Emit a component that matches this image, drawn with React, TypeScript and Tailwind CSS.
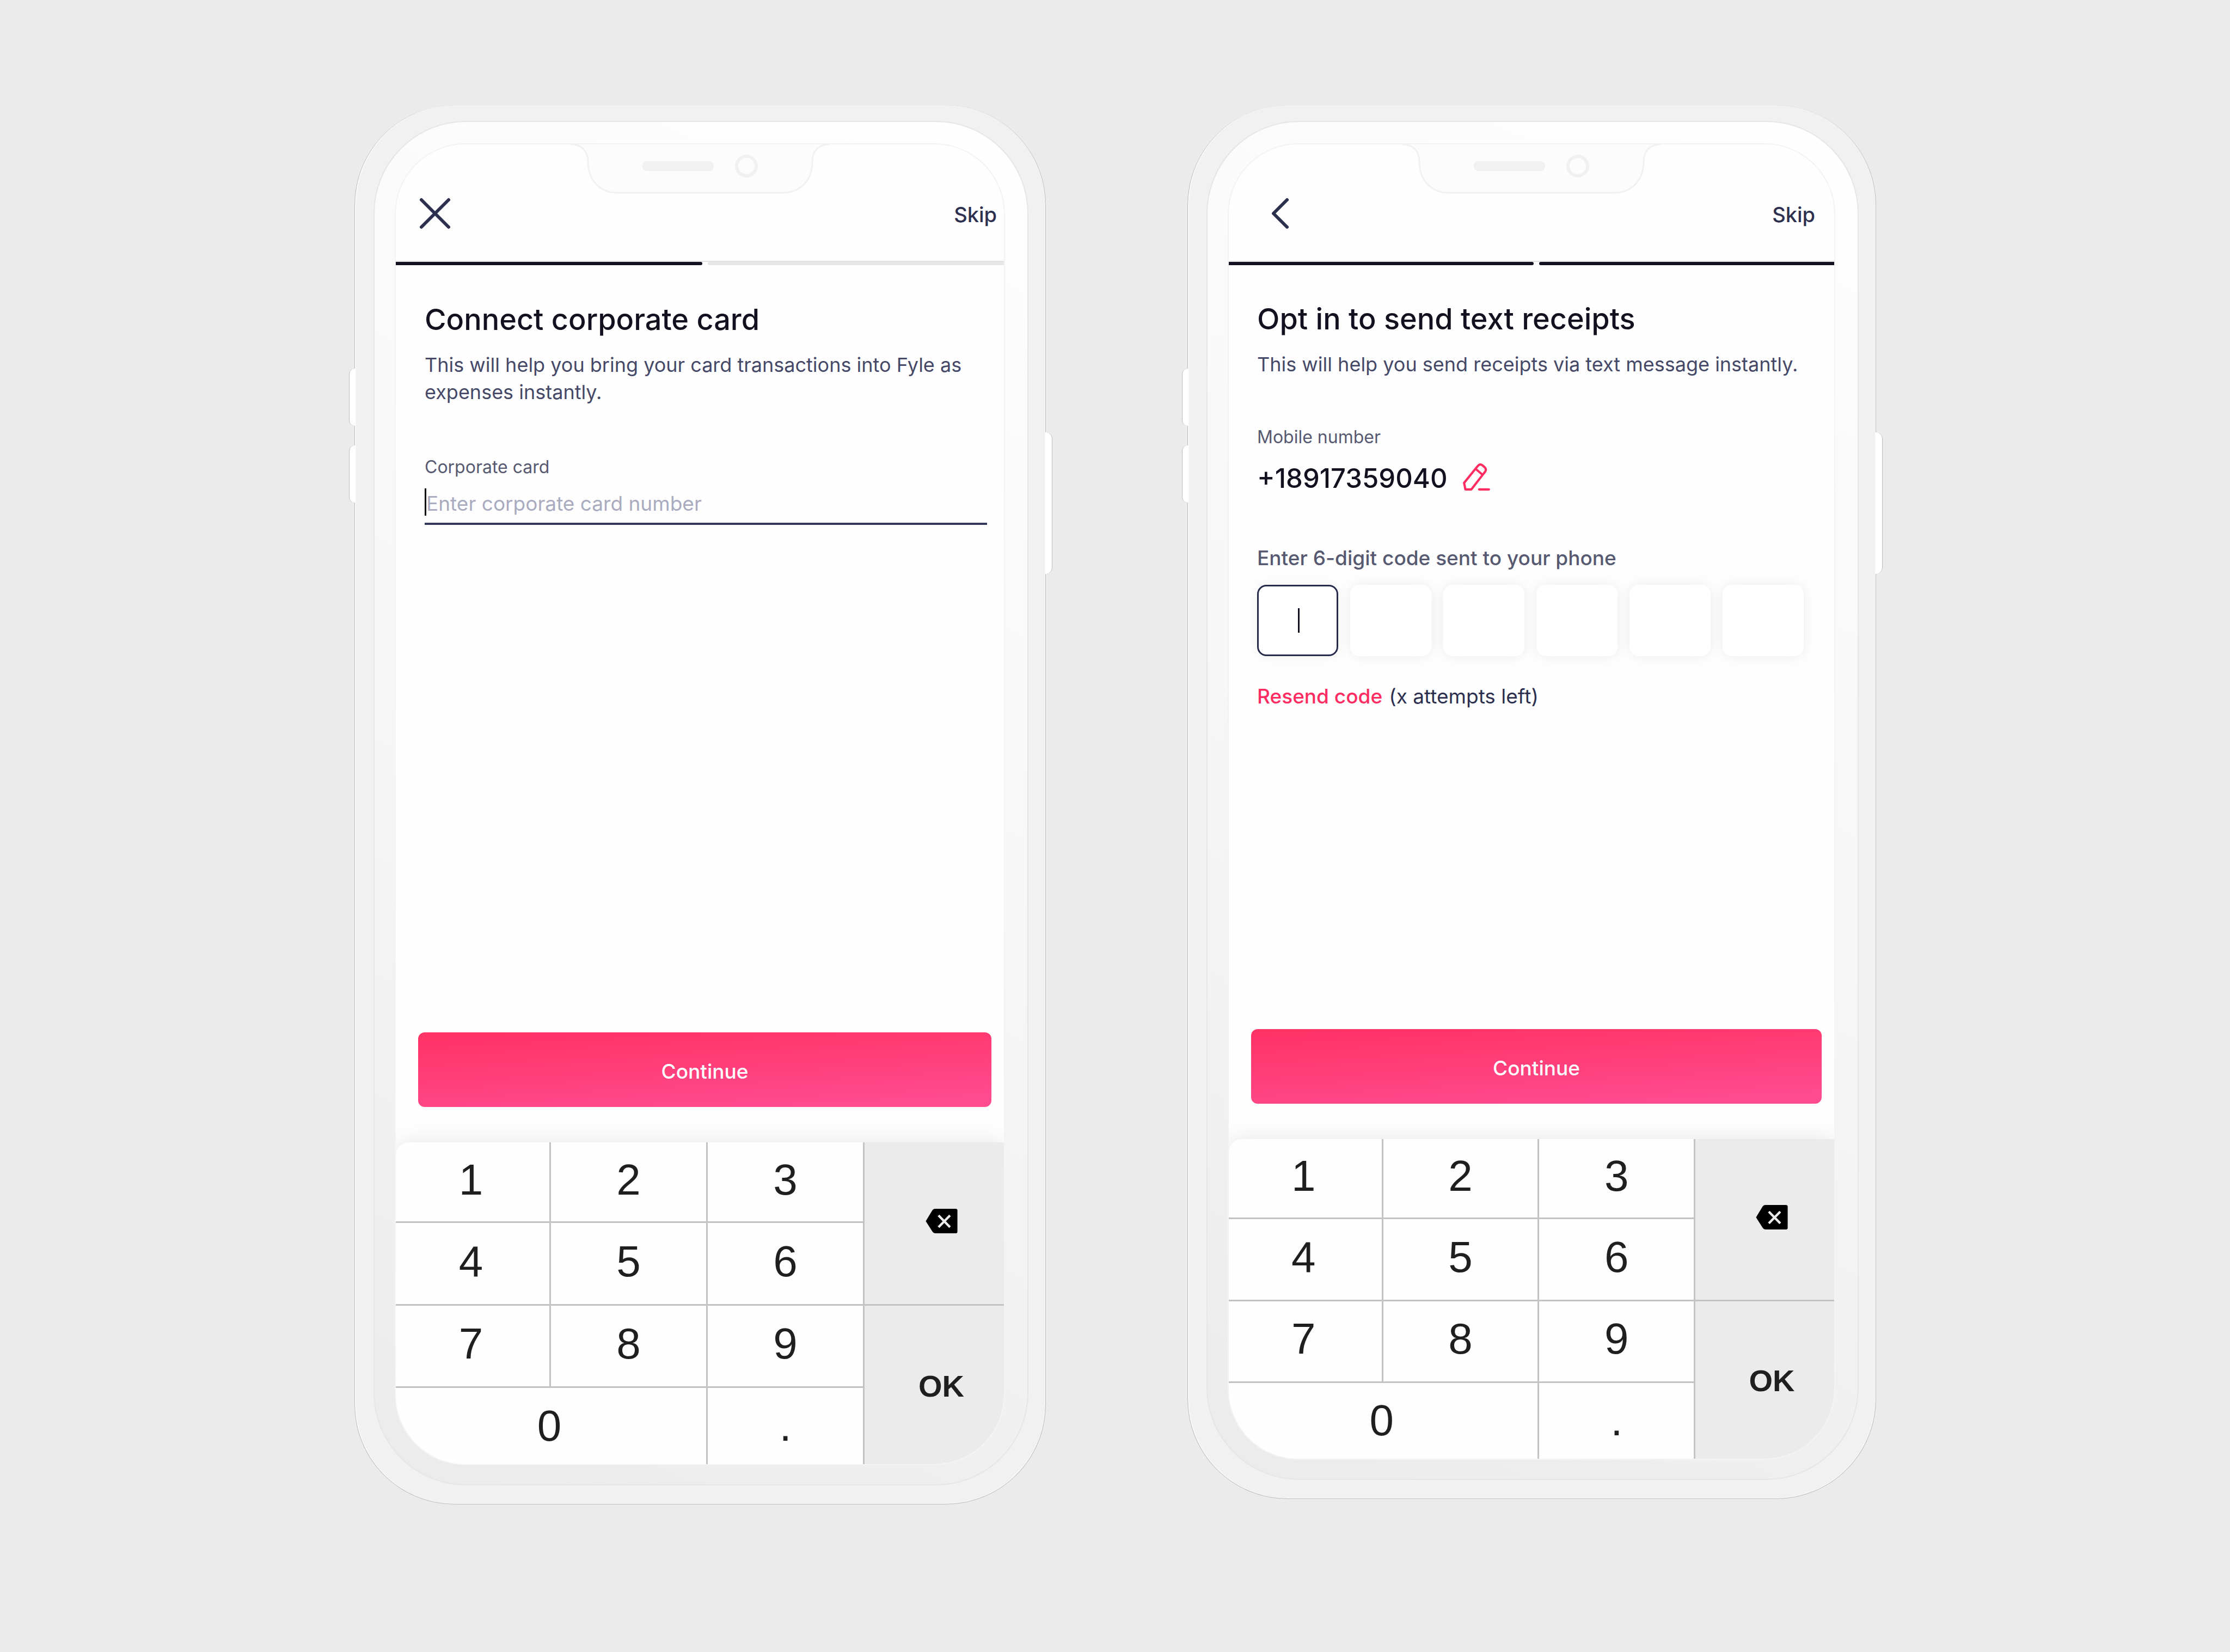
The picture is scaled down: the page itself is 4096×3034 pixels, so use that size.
import type { ReactNode } from "react";

function Notch() {
  return (
    <svg
      className="absolute top-0 left-1/2 -ml-[238px] h-[92px] w-[476px]"
      viewBox="0 0 476 92"
      fill="none"
      aria-hidden="true"
    >
      <path
        d="M0 -2 V1 C22 1 32 14 32 32 C32 66 54 89 86 89 H390 C422 89 444 66 444 32 C444 14 454 1 476 1 V-2 Z"
        fill="#fcfcfc"
      />
      <path
        d="M0 0 C22 0 32 14 32 32 C32 66 54 89 86 89 H390 C422 89 444 66 444 32 C444 14 454 0 476 0"
        stroke="#f1f1f1"
        strokeWidth="3"
      />
      <rect x="132" y="31" width="131" height="18" rx="8" fill="#f1f1f1" />
      <circle cx="323" cy="40" r="18" stroke="#f1f1f1" strokeWidth="6" />
    </svg>
  );
}

function Phone({ className, children }: { className: string; children: ReactNode }) {
  return (
    <section
      className={`relative flex rounded-[184px] border-x border-b border-[#bdbdbd] bg-[#f1f1f1] pt-[29px] pr-[31px] pb-[34px] pl-[34px] shadow-[inset_2px_0_0_#fafafa,inset_-1px_-1px_0_#fafafa] ${className}`}
    >
      <span className="absolute top-[484px] -left-[11px] h-[105px] w-[11px] rounded-l-[10px] border-l border-[#bdbdbd] bg-white" />
      <span className="absolute top-[625px] -left-[11px] h-[105px] w-[11px] rounded-l-[10px] border-l border-[#bdbdbd] bg-white" />
      <span className="absolute top-[601px] -right-[13px] h-[260px] w-[13px] rounded-r-[12px] border-r border-[#bdbdbd] bg-white" />
      <div className="flex min-w-0 flex-1 rounded-[170px] border-2 border-[#e6e6e6] bg-linear-[205deg,#ffffff_0%,#fbfbfb_20%,#f6f6f6_55%,#ebebeb_100%] pt-[39px] pr-[41px] pb-[35px] pl-[37px]">
        <div className="relative flex min-w-0 flex-1 flex-col overflow-hidden rounded-[130px] border-2 border-[#f3f3f3] bg-[#fefefe]">
          <Notch />
          {children}
        </div>
      </div>
    </section>
  );
}

function Header({ children, className }: { children: ReactNode; className: string }) {
  return (
    <header
      className={`flex h-[216px] shrink-0 items-start justify-between border-b-2 border-[#e3e3e6] pt-[97px] ${className}`}
    >
      {children}
      <button type="button" className="mt-[8px] text-[38px] leading-[48px] font-medium text-[#2c304e]">
        Skip
      </button>
    </header>
  );
}

function Progress({ second }: { second: string }) {
  return (
    <div className="grid h-[6px] shrink-0 grid-cols-[563fr_544fr] gap-[10px]">
      <span className="rounded-r-[3px] bg-[#12111f]" />
      <span className={`rounded-l-[3px] ${second}`} />
    </div>
  );
}

function ContinueButton() {
  return (
    <div className="mt-auto pr-[23px] pb-[65px] pl-[41px]">
      <button
        type="button"
        className="h-[137px] w-full rounded-[12px] bg-linear-[177deg,#ff3366_5%,#ff4c91_95%] pt-[6px] text-[37px] font-medium text-white"
      >
        Continue
      </button>
    </div>
  );
}

const key = "flex items-center justify-center border-[#c3c3c3]";

function Keypad({ className }: { className: string }) {
  return (
    <div
      className={`grid shrink-0 grid-cols-[285fr_288fr_288fr_256fr] grid-rows-[148fr_152fr_151fr_140fr] overflow-hidden rounded-tl-[24px] bg-[#fefefe] font-['Liberation_Sans',sans-serif] text-[80px] leading-none text-[#1f1f1f] shadow-[0_0_40px_rgba(0,0,0,0.10)] ${className}`}
    >
      <button type="button" className={`${key} border-r-3 border-b-3 pr-[6px] pb-[8px]`}>1</button>
      <button type="button" className={`${key} border-r-3 border-b-3 pb-[8px]`}>2</button>
      <button type="button" className={`${key} border-r-3 border-b-3 pb-[8px]`}>3</button>
      <button
        type="button"
        aria-label="Delete"
        className={`${key} row-span-2 border-b-3 bg-[#ebebeb] pb-[8px] pl-[26px]`}
      >
        <svg className="h-[45px] w-[59px]" viewBox="52 60 243 188" fill="none" aria-hidden="true">
          <path
            d="M52 155 L102 73 Q110 60 124 60 H281 Q295 60 295 74 V234 Q295 248 281 248 H124 Q112 248 104 237 Z"
            fill="#000"
          />
          <path d="M150 111 L238 201 M238 111 L150 201" stroke="#ebebeb" strokeWidth="18" />
        </svg>
      </button>
      <button type="button" className={`${key} border-r-3 border-b-3 pr-[6px] pb-[8px]`}>4</button>
      <button type="button" className={`${key} border-r-3 border-b-3 pb-[8px]`}>5</button>
      <button type="button" className={`${key} border-r-3 border-b-3 pb-[8px]`}>6</button>
      <button type="button" className={`${key} border-r-3 border-b-3 pr-[6px] pb-[8px]`}>7</button>
      <button type="button" className={`${key} border-r-3 border-b-3 pb-[8px]`}>8</button>
      <button type="button" className={`${key} border-r-3 border-b-3 pb-[8px]`}>9</button>
      <button type="button" className={`${key} row-span-2 bg-[#ebebeb] pt-[4px] pl-[26px] text-[56px] font-bold`}>
        OK
      </button>
      <button type="button" className={`${key} col-span-2 border-r-3 pr-[6px]`}>0</button>
      <button type="button" className={`${key} border-r-3`}>.</button>
    </div>
  );
}

function Title({ children }: { children: ReactNode }) {
  return <h1 className="text-[54px] leading-[68px] font-medium text-[#12111f]">{children}</h1>;
}

function ConnectCard() {
  return (
    <Phone className="mb-[271px]">
      <Header className="pr-[13px] pl-[42px]">
        <button type="button" aria-label="Close" className="h-[60px] w-[60px]">
          <svg viewBox="0 0 60 60" fill="none" aria-hidden="true">
            <path d="M5 5 L55 55 M55 5 L5 55" stroke="#2c304e" strokeWidth="6" strokeLinecap="round" />
          </svg>
        </button>
      </Header>
      <Progress second="bg-[#e7e7e9]" />
      <div className="pt-[66px] pr-[31px] pl-[53px]">
        <Title>Connect corporate card</Title>
        <p className="mt-[24px] text-[36px] leading-[50px] text-[#454967]">
          This will help you bring your card transactions into Fyle as expenses instantly.
        </p>
        <label htmlFor="card" className="mt-[93px] block text-[32px] leading-[40px] text-[#565970]">
          Corporate card
        </label>
        <div className="mt-[19px] flex h-[67px] items-start border-b-4 border-[#353959]">
          <span className="h-[50px] w-[3px] bg-black" />
          <input
            id="card"
            type="text"
            inputMode="numeric"
            placeholder="Enter corporate card number"
            className="mt-[3px] h-[50px] min-w-0 flex-1 text-[37px] outline-none placeholder:text-[#a9abbf]"
          />
        </div>
      </div>
      <ContinueButton />
      <Keypad className="h-[591px]" />
    </Phone>
  );
}

function OptIn() {
  return (
    <Phone className="mb-[281px]">
      <Header className="pr-[35px] pl-[76px]">
        <button type="button" aria-label="Back" className="h-[60px] w-[36px]">
          <svg viewBox="0 0 36 60" fill="none" aria-hidden="true">
            <path
              d="M31 5 L6 30 L31 55"
              stroke="#2c304e"
              strokeWidth="6"
              strokeLinecap="round"
              strokeLinejoin="round"
            />
          </svg>
        </button>
      </Header>
      <Progress second="bg-[#12111f]" />
      <div className="pt-[65px] pr-[56px] pl-[52px]">
        <Title>Opt in to send text receipts</Title>
        <p className="mt-[24px] text-[36px] leading-[50px] text-[#454967]">
          This will help you send receipts via text message instantly.
        </p>
        <p className="mt-[89px] text-[32px] leading-[40px] text-[#565970]">Mobile number</p>
        <div className="mt-[26px] flex items-start gap-[28px]">
          <p className="text-[49px] leading-[60px] font-medium text-[#12111f]">+18917359040</p>
          <button type="button" aria-label="Edit mobile number" className="mt-[2px] h-[50px] w-[50px]">
            <svg
              viewBox="45 45 205 205"
              fill="none"
              stroke="#ff2c62"
              strokeWidth="17"
              strokeLinejoin="round"
              strokeLinecap="round"
              aria-hidden="true"
            >
              <path d="M64 241 L54 192 L142 83 L160 62 Q174 47 191 59 L210 75 Q224 90 213 107 L194 131 L109 241 Z" />
              <path d="M144 89 L190 128" />
              <path d="M167 241 H241" />
            </svg>
          </button>
        </div>
        <p id="code-label" className="mt-[92px] text-[37px] leading-[48px] font-medium text-[#565970]">
          Enter 6-digit code sent to your phone
        </p>
        <div role="group" aria-labelledby="code-label" className="mt-[25px] grid grid-cols-6 gap-[22px]">
          <div className="relative">
            <input
              aria-label="Digit 1"
              maxLength={1}
              className="block h-[131px] w-full rounded-[17px] border-3 border-[#262b4b] bg-white text-center text-[48px] shadow-[0_0_24px_rgba(0,0,0,0.06)] outline-none"
            />
            <span className="absolute top-[43px] left-1/2 h-[45px] w-[3px] bg-[#12111f]" />
          </div>
          {[2, 3, 4, 5, 6].map((n) => (
            <input
              key={n}
              aria-label={`Digit ${n}`}
              maxLength={1}
              className="h-[131px] w-full min-w-0 rounded-[17px] bg-white text-center text-[48px] shadow-[0_0_24px_rgba(0,0,0,0.08)] outline-none"
            />
          ))}
        </div>
        <p className="mt-[50px] flex gap-[12px] text-[37px] leading-[48px] text-[#2c304e]">
          <button type="button" className="font-medium text-[#ff2c62]">
            Resend code
          </button>
          <span>(x attempts left)</span>
        </p>
      </div>
      <ContinueButton />
      <Keypad className="h-[587px]" />
    </Phone>
  );
}

export default function App() {
  return (
    <main className="grid min-h-screen grid-cols-[minmax(0,1270fr)_minmax(0,1265fr)] gap-[260px] bg-[#ebebeb] pt-[193px] pr-[650px] pl-[651px] font-['Inter',sans-serif]">
      <ConnectCard />
      <OptIn />
    </main>
  );
}
